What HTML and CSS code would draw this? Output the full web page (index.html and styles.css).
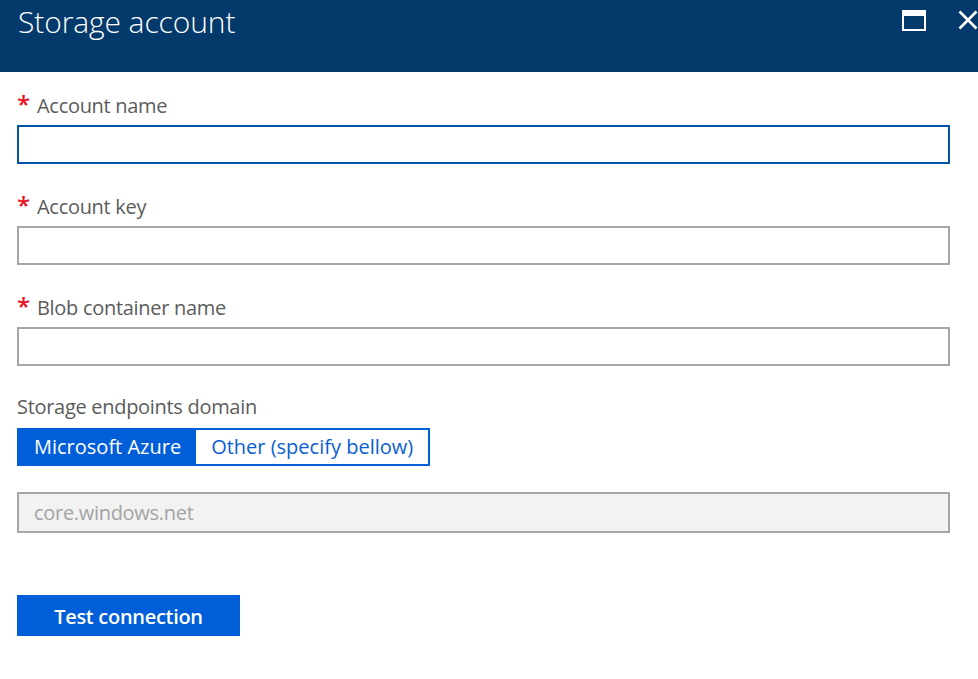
FILE: index.html
```html
<!DOCTYPE html>
<html>
<head>
<meta charset="utf-8">
<link rel="stylesheet" href="styles.css">
</head>
<body>
<div class="blade">
  <header class="blade-header">
    <h1 class="blade-title">Storage account</h1>
    <div class="blade-actions">
      <svg class="icon-max" width="24" height="21" viewBox="0 0 24 21">
        <rect x="1" y="1" width="22" height="19" fill="none" stroke="#fff" stroke-width="2"/>
        <rect x="1" y="1" width="22" height="5" fill="#fff"/>
      </svg>
      <svg class="icon-close" width="20" height="20" viewBox="0 0 20 20">
        <path d="M1.5 1.5 L18.5 18.5 M18.5 1.5 L1.5 18.5" stroke="#fff" stroke-width="2.6" fill="none"/>
      </svg>
    </div>
  </header>
  <main class="form">
    <div class="field">
      <label class="label"><span class="req">*</span>Account name</label>
      <div class="input input-focus"></div>
    </div>
    <div class="field">
      <label class="label"><span class="req">*</span>Account key</label>
      <div class="input"></div>
    </div>
    <div class="field">
      <label class="label"><span class="req">*</span>Blob container name</label>
      <div class="input"></div>
    </div>
    <div class="field">
      <label class="label">Storage endpoints domain</label>
      <div class="toggle">
        <span class="toggle-opt toggle-on">Microsoft Azure</span>
        <span class="toggle-opt">Other (specify bellow)</span>
      </div>
    </div>
    <div class="input input-disabled">core.windows.net</div>
    <button class="btn">Test connection</button>
  </main>
</div>
</body>
</html>
```

FILE: styles.css
```css
html, body {
  margin: 0;
  padding: 0;
  background: #fff;
}
body {
  font-family: "Open Sans", "Noto Sans", sans-serif;
  width: 978px;
  height: 679px;
  overflow: hidden;
}
.blade-header {
  height: 72px;
  background: #03396b;
  display: flex;
  justify-content: space-between;
  align-items: flex-start;
  box-sizing: border-box;
  padding: 0 0 0 18px;
}
.blade-title {
  margin: 0;
  font-weight: 300;
  font-size: 30px;
  line-height: 44px;
  color: #fff;
  letter-spacing: -0.1px;
}
.blade-actions {
  display: flex;
  align-items: flex-start;
  padding-top: 10px;
}
.icon-max {
  display: block;
  margin-right: 32px;
}
.icon-close {
  display: block;
  margin-right: 0;
}
.form {
  padding: 20px 28px 0 17px;
  display: flex;
  flex-direction: column;
  align-items: flex-start;
}
.field {
  display: flex;
  flex-direction: column;
  align-items: stretch;
  align-self: stretch;
  margin-bottom: 29px;
}
.field:nth-child(4) {
  align-items: flex-start;
  margin-bottom: 26px;
}
.label {
  font-size: 20px;
  line-height: 24px;
  height: 24px;
  color: #5c5c5c;
  margin-bottom: 9px;
  display: flex;
  align-items: baseline;
  letter-spacing: -0.3px;
}
.req {
  color: #e81123;
  font-size: 24px;
  font-weight: 600;
  width: 20px;
}
.input {
  box-sizing: border-box;
  height: 39px;
  border: 2px solid #a6a6a6;
  background: #fff;
}
.input-focus {
  border-color: #0055a6;
}
.input-disabled {
  align-self: stretch;
  height: 41px;
  background: #f2f2f2;
  color: #a3a3a3;
  font-size: 20px;
  line-height: 38px;
  padding-left: 15px;
  letter-spacing: -0.3px;
}
.toggle {
  display: flex;
  border: 2px solid #005ed8;
  height: 38px;
  box-sizing: border-box;
}
.toggle-opt {
  font-size: 20px;
  line-height: 34px;
  padding: 0 15px;
  color: #0a5ed4;
  letter-spacing: 0;
}
.toggle-on {
  background: #005ed8;
  color: #fff;
}
.btn {
  margin-top: 62px;
  width: 223px;
  height: 41px;
  border: 0;
  background: #005ed8;
  color: #fff;
  font-family: "Open Sans", "Noto Sans", sans-serif;
  font-weight: 600;
  font-size: 20px;
  line-height: 43px;
  letter-spacing: -0.3px;
  padding: 0;
}
```
